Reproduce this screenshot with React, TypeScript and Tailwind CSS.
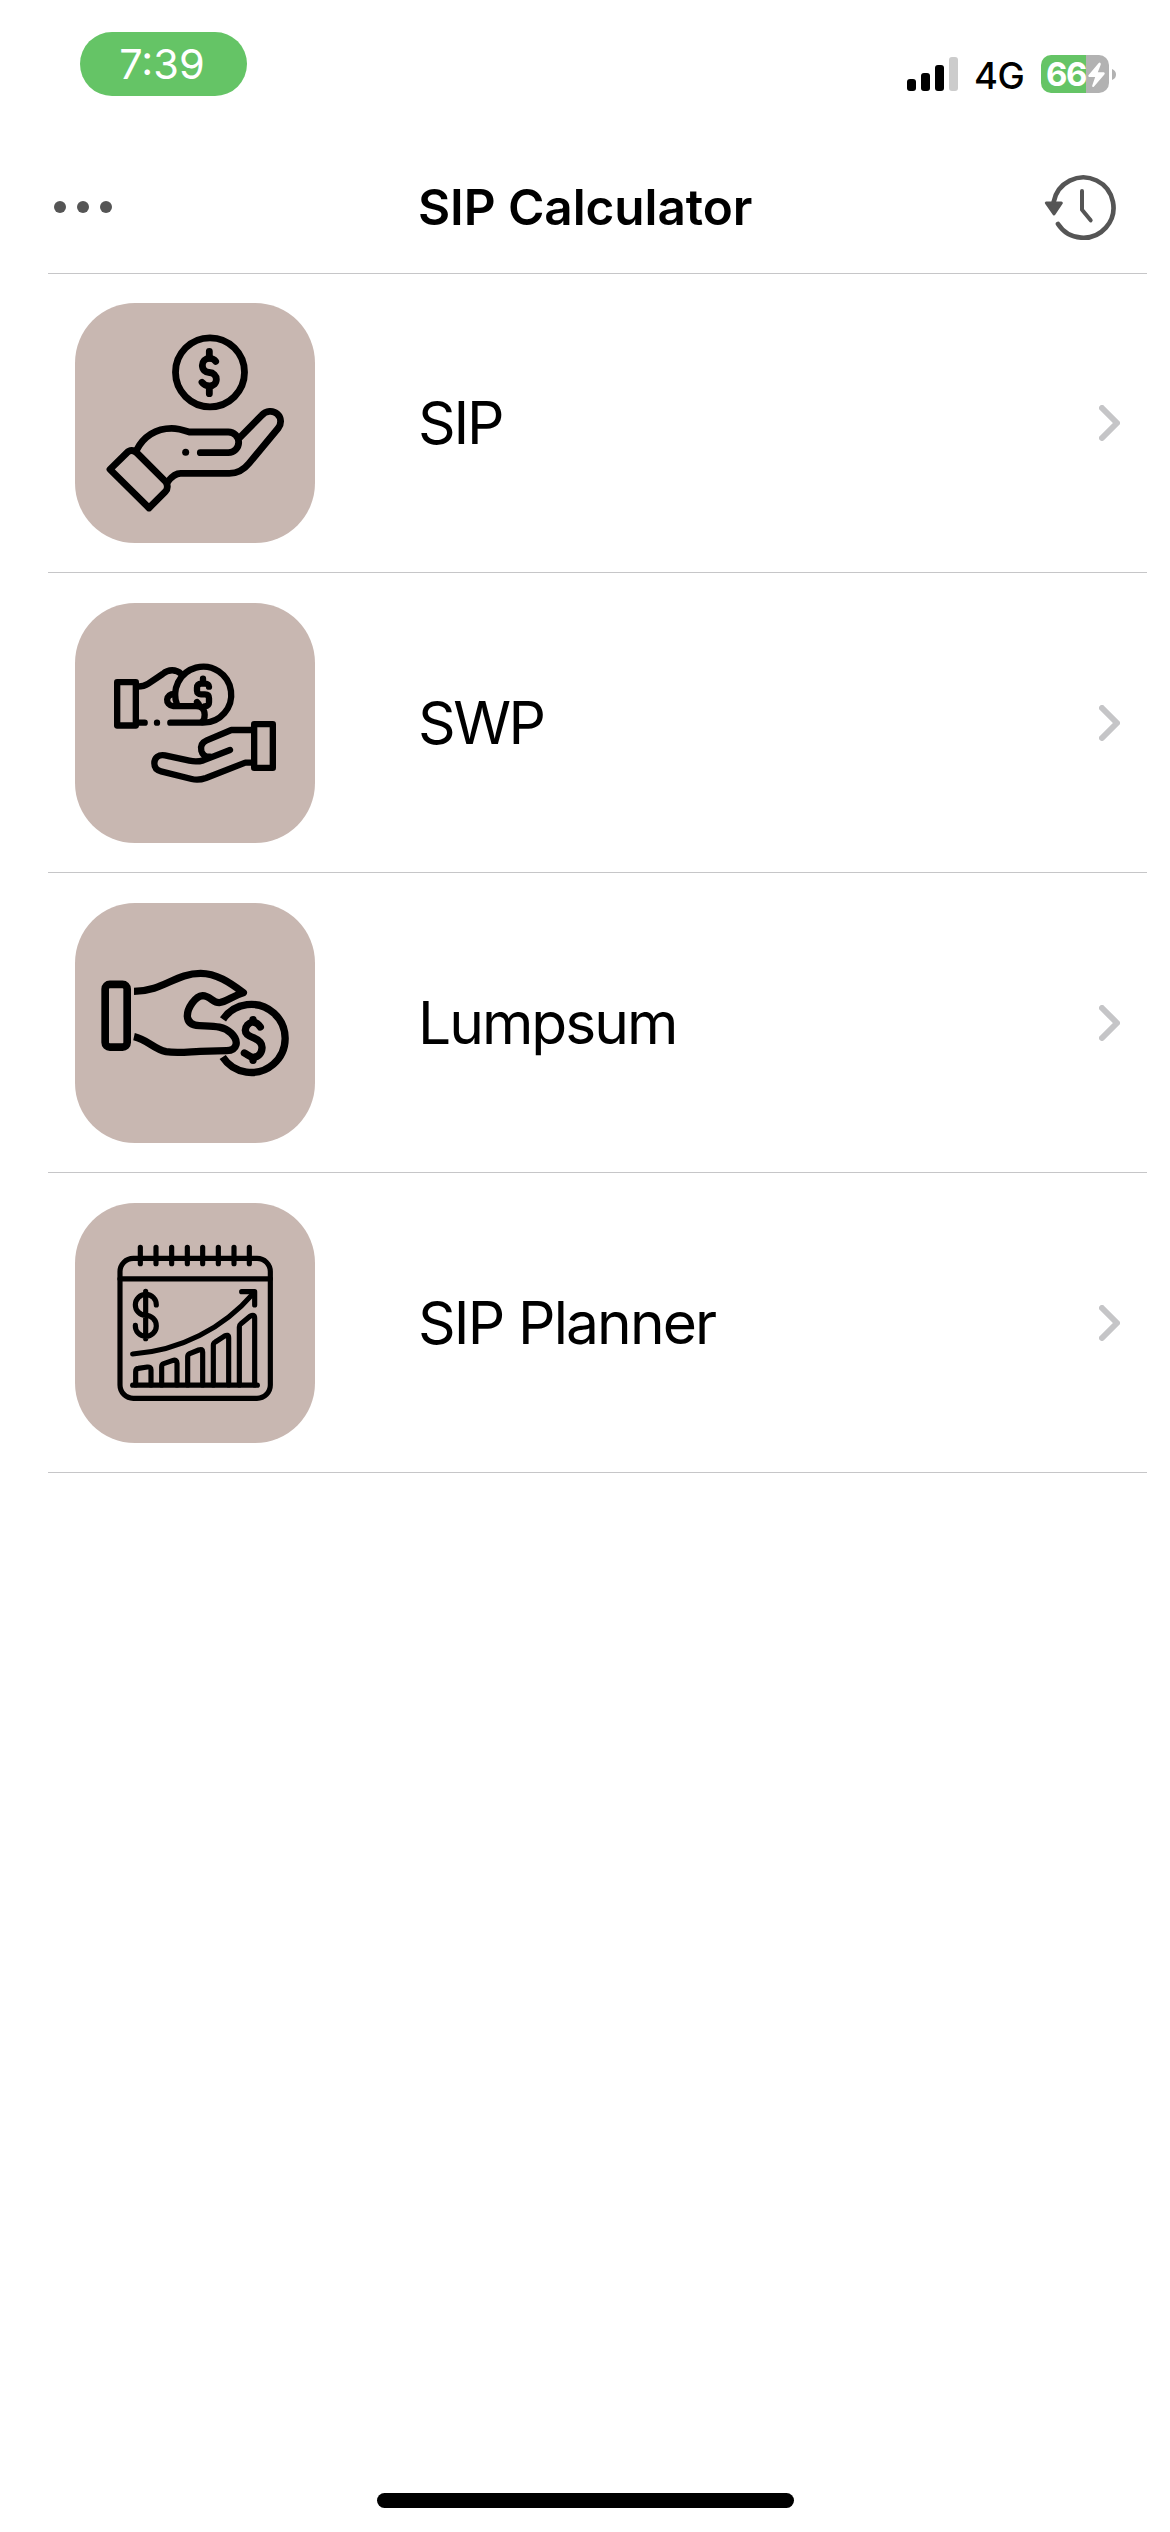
import type { ReactNode } from "react";

function Tile({ width, children }: { width: number; children: ReactNode }) {
  return (
    <div className="size-[240px] shrink-0 overflow-hidden rounded-[60px] bg-[#c8b7b1]">
      <svg
        viewBox="45 39 720 720"
        className="size-full"
        fill="none"
        stroke="#000"
        strokeWidth={width}
        strokeLinecap="round"
        strokeLinejoin="round"
      >
        {children}
      </svg>
    </div>
  );
}

function SipIcon() {
  return (
    <Tile width={20.5}>
      <circle cx="450" cy="247" r="103.5" />
      <path d="M448 184V204M448 290V311" />
      <path d="M467 214C463 208 456 205 448 205C436 205 427 214 427 226C427 239 436 247 448 247.500C460 248 469 257 469 268C469 280 460 288 448 288C439 288 431 284 426 277" />
      <path d="M230 480C250 440 288 415 335 415C354 415 370 420 388 426H505A31 31 0 0 1 505 488H421" />
      <path d="M377 487h.01" strokeWidth="21" />
      <path d="M540 442L605 376C618 362 639 360 652 372C665 384 664 402 655 414L567 520C550 541 530 550 508 550H362C345 550 335 560 324 574" />
      <path d="M150 538L200 489C209 479 221 479 231 489L316 574C324 583 324 597 316 605L267 654Z" />
    </Tile>
  );
}

function SwpIcon() {
  return (
    <Tile width={19}>
      <rect x="171.500" y="276.500" width="56" height="130" />
      <path d="M232 290C248 290 255 288 265 281L308 252C325 237 348 237 364 252" />
      <path d="M352 346A84 84 0 1 1 430 398H331" />
      <path d="M345 312C315 310 314 346 340 348.500H408C424 348.500 434 358 434 374C434 384 431 392 426 396" />
      <path d="M291 398h.01M236 398H254" />
      <path d="M429 266V281M447 290C447 285 443 281 436 281H424C415 281 411 286 411 293V302C411 309 416 313 423 313H435C443 313 447 317 447 325V337C447 345 443 348 434 349M411 336L416 342" />
      <rect x="582.500" y="402.500" width="56" height="131" />
      <path d="M577 420H514L440 451C426 457 421 468 424 482C427 494 436 501 450 500" />
      <path d="M510 480L430 511C416 515 402 515 388 512L315 496C296 492 283 504 283 520C283 533 290 541 303 544L395 567C410 571 424 569 438 564L556 518H577" />
    </Tile>
  );
}

function LumpsumIcon() {
  return (
    <Tile width={22}>
      <rect x="135.500" y="283" width="66" height="188.500" rx="14" strokeWidth="23" />
      <path
        strokeLinecap="butt"
        d="M222 304C312 303 345 250 422 250C468 250 508 276 550 308C522 316 497 337 478 338C460 339 450 318 428 317C405 319 382 355 382 378C383 398 397 406 418 407C460 409 489 407 513 429C539 454 531 481 500 482L420 484C380 486 350 490 318 485C280 477 263 449 222 440"
      />
      <path strokeLinecap="butt" d="M489 388A102 102 0 1 1 488 501" />
      <path d="M579 389V394M579 506V511" />
      <path d="M601 411C594 400 588 396 578 396C566 398 556 409 556 421C556 433 568 439 580 443C596 450 607 460 606 474C605 490 595 501 580 502C569 502 562 492 553 489" />
    </Tile>
  );
}

function PlannerIcon() {
  return (
    <Tile width={15.5}>
      <rect x="180" y="205" width="451" height="420" rx="40" />
      <path d="M180 266.500H631" />
      <path d="M241 172V221M288 172V221M335 172V221M382 172V221M428 172V221M475 172V221M522 172V221M568 172V221" />
      <path d="M257 304V446M289 345A31.500 31.500 0 1 0 257 376A31.500 31.500 0 1 1 226 406" />
      <path d="M218 492C360 482 490 415 580 310" />
      <path d="M545 305H584V345" />
      <path d="M218 585.500H592" />
      <path d="M227 585V545Q227 536 235 535L262 531Q273 530 273 539V585" />
      <path d="M305 585V530Q305 523 311 521L337 512Q351 507 351 520V585" />
      <path d="M383 585V500Q383 494 389 491L416 480Q428 475 428 486V585" />
      <path d="M460 585V465Q460 459 466 456L492 439Q506 431 506 443V585" />
      <path d="M538 585V411Q538 405 542 402L570 379Q584 371 584 384V585" />
    </Tile>
  );
}

function Chevron() {
  return (
    <svg
      viewBox="0 0 21 36"
      className="h-9 w-[21px]"
      fill="none"
      stroke="#c5c5c7"
      strokeWidth="6"
      strokeLinecap="round"
      strokeLinejoin="round"
    >
      <path d="M3 3L18 18L3 33" />
    </svg>
  );
}

function StatusBar() {
  return (
    <div className="flex h-[128px] items-start justify-between pl-20 pr-[54px] pt-8">
      <div className="flex h-16 w-[167px] items-center justify-center rounded-[32px] bg-[#65c466] pr-[3px] pt-[2px] text-[41.500px] leading-none text-white">
        <span>7:39</span>
      </div>
      <div className="flex h-[38px] pt-[23px]">
        <div className="mt-[2px] flex h-[34px] items-end gap-[5px]">
          <div className="h-3 w-[9px] rounded-[3px] bg-black" />
          <div className="h-[18px] w-[9px] rounded-[3px] bg-black" />
          <div className="h-[26px] w-[9px] rounded-[3px] bg-black" />
          <div className="h-[34px] w-[9px] rounded-[3px] bg-[#cccccc]" />
        </div>
        <div className="ml-4 w-[67px] whitespace-nowrap text-[36.500px] font-medium leading-[42px] tracking-[-0.500px]">4G</div>
        <div className="relative flex h-[38px] w-[68px] items-center rounded-[10px] bg-[linear-gradient(to_right,#65c466_45px,#b2b2b2_45px)] pl-[5px] text-[33px] font-bold text-white">
          <span className="leading-[42px] tracking-[-1.500px]">66</span>
          <svg viewBox="682 186 50 78" className="absolute left-[47px] top-[7px] h-[26px] w-[17px]" fill="#fff">
            <path d="M718 188Q721 190 719 196L711 217H729Q734 219 730 224L699 260Q694 263 694 257L703 231H685Q680 229 684 224L713 190Q716 187 718 188Z" />
          </svg>
        </div>
        <svg viewBox="0 0 4 11" className="ml-[3px] mt-[14px] h-[11px] w-1" fill="#b2b2b2">
          <path d="M0 0Q4 1.500 4 5.500T0 11Z" />
        </svg>
      </div>
    </div>
  );
}

function Header() {
  return (
    <div className="flex h-[145px] items-start pl-[54px] pt-[45px]">
      <div className="flex w-[364px] gap-[11px] pt-7">
        <div className="size-3 rounded-full bg-[#555]" />
        <div className="size-3 rounded-full bg-[#555]" />
        <div className="size-3 rounded-full bg-[#555]" />
      </div>
      <h1 className="w-[625px] pt-px text-[49.500px] font-semibold leading-[66px] tracking-[-0.080px]">SIP Calculator</h1>
      <svg
        viewBox="549 519 222 204"
        className="h-[68px] w-[74px]"
        fill="none"
        stroke="#555"
        strokeWidth="14"
        strokeLinecap="round"
        strokeLinejoin="round"
      >
        <path d="M581 606A90.500 90.500 0 1 1 594 672" />
        <path d="M666 573V629L692 661" strokeWidth="12" />
        <path d="M559 609H604L582 642Z" fill="#555" strokeWidth="9" />
      </svg>
    </div>
  );
}

const items = [
  { label: "SIP", icon: <SipIcon />, tracking: "tracking-[-2.200px]" },
  { label: "SWP", icon: <SwpIcon />, tracking: "tracking-[-2.500px]" },
  { label: "Lumpsum", icon: <LumpsumIcon />, tracking: "tracking-[-2px]" },
  { label: "SIP Planner", icon: <PlannerIcon />, tracking: "tracking-[-1.850px]" },
];

export default function App() {
  return (
    <div className="flex h-[2532px] w-[1170px] flex-col bg-white font-['Inter',sans-serif] text-black">
      <StatusBar />
      <Header />
      <div className="ml-12 mr-[23px]">
        <div className="h-px bg-[#c6c6c8]" />
        <div className="-mt-px">
          {items.map((item) => (
            <div key={item.label} className="flex h-[300px] items-center border-b border-[#c6c6c8] pl-[27px] pr-[27px] pt-px">
              {item.icon}
              <div className={`ml-[103px] flex-1 text-[58.700px] leading-[72px] ${item.tracking}`}>{item.label}</div>
              <Chevron />
            </div>
          ))}
        </div>
      </div>
      <div className="mx-auto mb-6 mt-auto h-[15px] w-[417px] rounded-full bg-black" />
    </div>
  );
}
